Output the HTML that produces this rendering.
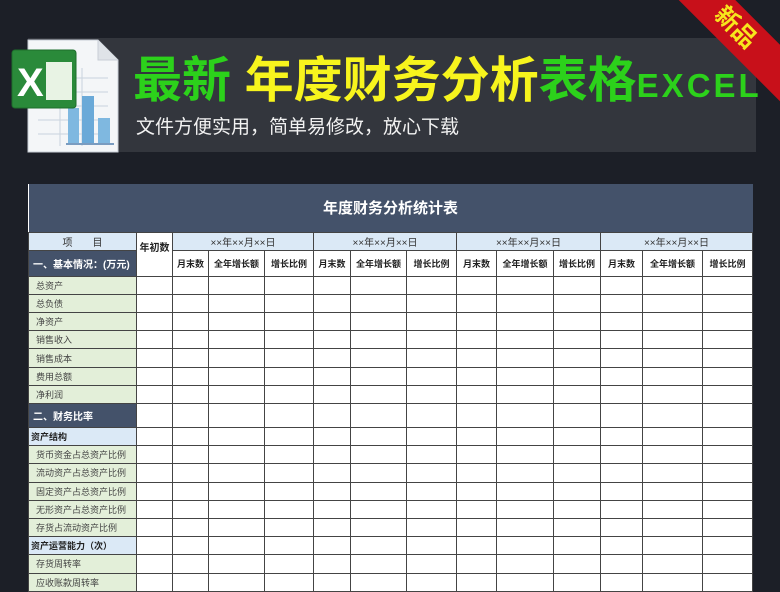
<!DOCTYPE html>
<html><head><meta charset="utf-8"><style>
*{margin:0;padding:0;box-sizing:border-box}
body{width:780px;height:585px;overflow:hidden;background:#1c1f27;font-family:"Liberation Sans","Noto Sans CJK SC",sans-serif;position:relative}
.banner{position:absolute;left:28px;top:38px;width:728px;height:114px;background:#33363d}
.t1{position:absolute;left:133px;top:50px;font-size:49px;font-weight:bold;white-space:nowrap;letter-spacing:0px;line-height:62px}
.g{color:#2cd11b}.y{color:#f7f41d}
.ex{font-size:33px;color:#2cd11b;letter-spacing:3px}
.t2{position:absolute;left:136px;top:112px;font-size:19px;color:#f2f2f2;white-space:nowrap}
.ribbon{position:absolute;right:-40px;top:8px;width:170px;height:40px;background:#c8101a;transform:rotate(45deg);transform-origin:center;color:#f7e51d;font-size:24px;font-weight:bold;text-align:center;line-height:40px}
table{position:absolute;left:28px;top:184px;border-collapse:collapse;table-layout:fixed;background:#fff;font-size:9px;color:#222}
td{border:1px solid #444;height:18.2px;padding:0;text-align:center;white-space:nowrap;overflow:hidden}
.ttl{background:#44526a;color:#fff;font-size:15px;font-weight:bold;height:48px;border:none}
.hb{background:#dbe9f6;color:#333;font-size:10px}
.h2{font-weight:bold;font-size:9px}
.lab{background:#e3efd9;text-align:left;padding-left:7px;color:#444}
.sec{background:#44526a;color:#fff;text-align:left;padding-left:4px;font-weight:bold;font-size:10px}
.sub{background:#dbe9f6;text-align:left;padding-left:2px;font-weight:bold}
</style></head><body>
<div class="banner"></div>
<svg style="position:absolute;left:8px;top:38px" width="112" height="116" viewBox="0 0 112 116">
<path d="M20 2 H90 L110 22 V114 H20 Z" fill="#f4f6f8" stroke="#c9ced6"/>
<path d="M90 2 V22 H110" fill="#dfe3e8" stroke="#c9ced6"/>
<g stroke="#c9d3de" stroke-width="1"><path d="M30 40H100M30 54H100M30 68H100M30 82H100M30 96H100M52 30V108M74 30V108"/></g>
<rect x="60" y="70" width="11" height="36" fill="#7fb8e0"/><rect x="74" y="58" width="12" height="48" fill="#6aa9d8"/><rect x="90" y="80" width="12" height="26" fill="#7fb8e0"/>
<path d="M58 106H106" stroke="#7a9cc0" stroke-width="2"/>
<rect x="4" y="12" width="64" height="58" rx="3" fill="#2a8a3a" stroke="#1d6e2b"/>
<rect x="38" y="24" width="26" height="38" fill="#e8f3e4"/>
<text x="9" y="58" font-size="40" font-weight="bold" fill="#fff" font-family="Liberation Sans">X</text>
</svg>
<div class="t1"><span class="g">最新</span> <span class="y">年度财务分析</span><span class="g">表格</span><span class="ex">EXCEL</span></div>
<div class="t2">文件方便实用，简单易修改，放心下载</div>
<div class="ribbon">新品</div>
<table>
<colgroup><col style="width:108px"><col style="width:36px"><col style="width:36px"><col style="width:56px"><col style="width:49px"><col style="width:37px"><col style="width:56px"><col style="width:50px"><col style="width:40px"><col style="width:57px"><col style="width:47px"><col style="width:42px"><col style="width:60px"><col style="width:50px"></colgroup>
<tr><td colspan="14" class="ttl">年度财务分析统计表</td></tr>
<tr><td class="hb">项　　目</td><td rowspan="2" class="h2" style="vertical-align:top;padding-top:6px;font-size:10px">年初数</td><td colspan="3" class="hb">××年××月××日</td><td colspan="3" class="hb">××年××月××日</td><td colspan="3" class="hb">××年××月××日</td><td colspan="3" class="hb">××年××月××日</td></tr>
<tr style="height:26px"><td class="sec">一、基本情况：(万元)</td><td class="h2">月末数</td><td class="h2">全年增长额</td><td class="h2">增长比例</td><td class="h2">月末数</td><td class="h2">全年增长额</td><td class="h2">增长比例</td><td class="h2">月末数</td><td class="h2">全年增长额</td><td class="h2">增长比例</td><td class="h2">月末数</td><td class="h2">全年增长额</td><td class="h2">增长比例</td></tr>
<tr><td class="lab">总资产</td><td></td><td></td><td></td><td></td><td></td><td></td><td></td><td></td><td></td><td></td><td></td><td></td><td></td></tr>
<tr><td class="lab">总负债</td><td></td><td></td><td></td><td></td><td></td><td></td><td></td><td></td><td></td><td></td><td></td><td></td><td></td></tr>
<tr><td class="lab">净资产</td><td></td><td></td><td></td><td></td><td></td><td></td><td></td><td></td><td></td><td></td><td></td><td></td><td></td></tr>
<tr><td class="lab">销售收入</td><td></td><td></td><td></td><td></td><td></td><td></td><td></td><td></td><td></td><td></td><td></td><td></td><td></td></tr>
<tr><td class="lab">销售成本</td><td></td><td></td><td></td><td></td><td></td><td></td><td></td><td></td><td></td><td></td><td></td><td></td><td></td></tr>
<tr><td class="lab">费用总额</td><td></td><td></td><td></td><td></td><td></td><td></td><td></td><td></td><td></td><td></td><td></td><td></td><td></td></tr>
<tr><td class="lab">净利润</td><td></td><td></td><td></td><td></td><td></td><td></td><td></td><td></td><td></td><td></td><td></td><td></td><td></td></tr>
<tr style="height:24px"><td class="sec">二、财务比率</td><td></td><td></td><td></td><td></td><td></td><td></td><td></td><td></td><td></td><td></td><td></td><td></td><td></td></tr>
<tr><td class="sub">资产结构</td><td></td><td></td><td></td><td></td><td></td><td></td><td></td><td></td><td></td><td></td><td></td><td></td><td></td></tr>
<tr><td class="lab">货币资金占总资产比例</td><td></td><td></td><td></td><td></td><td></td><td></td><td></td><td></td><td></td><td></td><td></td><td></td><td></td></tr>
<tr><td class="lab">流动资产占总资产比例</td><td></td><td></td><td></td><td></td><td></td><td></td><td></td><td></td><td></td><td></td><td></td><td></td><td></td></tr>
<tr><td class="lab">固定资产占总资产比例</td><td></td><td></td><td></td><td></td><td></td><td></td><td></td><td></td><td></td><td></td><td></td><td></td><td></td></tr>
<tr><td class="lab">无形资产占总资产比例</td><td></td><td></td><td></td><td></td><td></td><td></td><td></td><td></td><td></td><td></td><td></td><td></td><td></td></tr>
<tr><td class="lab">存货占流动资产比例</td><td></td><td></td><td></td><td></td><td></td><td></td><td></td><td></td><td></td><td></td><td></td><td></td><td></td></tr>
<tr><td class="sub">资产运营能力（次）</td><td></td><td></td><td></td><td></td><td></td><td></td><td></td><td></td><td></td><td></td><td></td><td></td><td></td></tr>
<tr><td class="lab">存货周转率</td><td></td><td></td><td></td><td></td><td></td><td></td><td></td><td></td><td></td><td></td><td></td><td></td><td></td></tr>
<tr><td class="lab">应收账款周转率</td><td></td><td></td><td></td><td></td><td></td><td></td><td></td><td></td><td></td><td></td><td></td><td></td><td></td></tr>
</table>
</body></html>
